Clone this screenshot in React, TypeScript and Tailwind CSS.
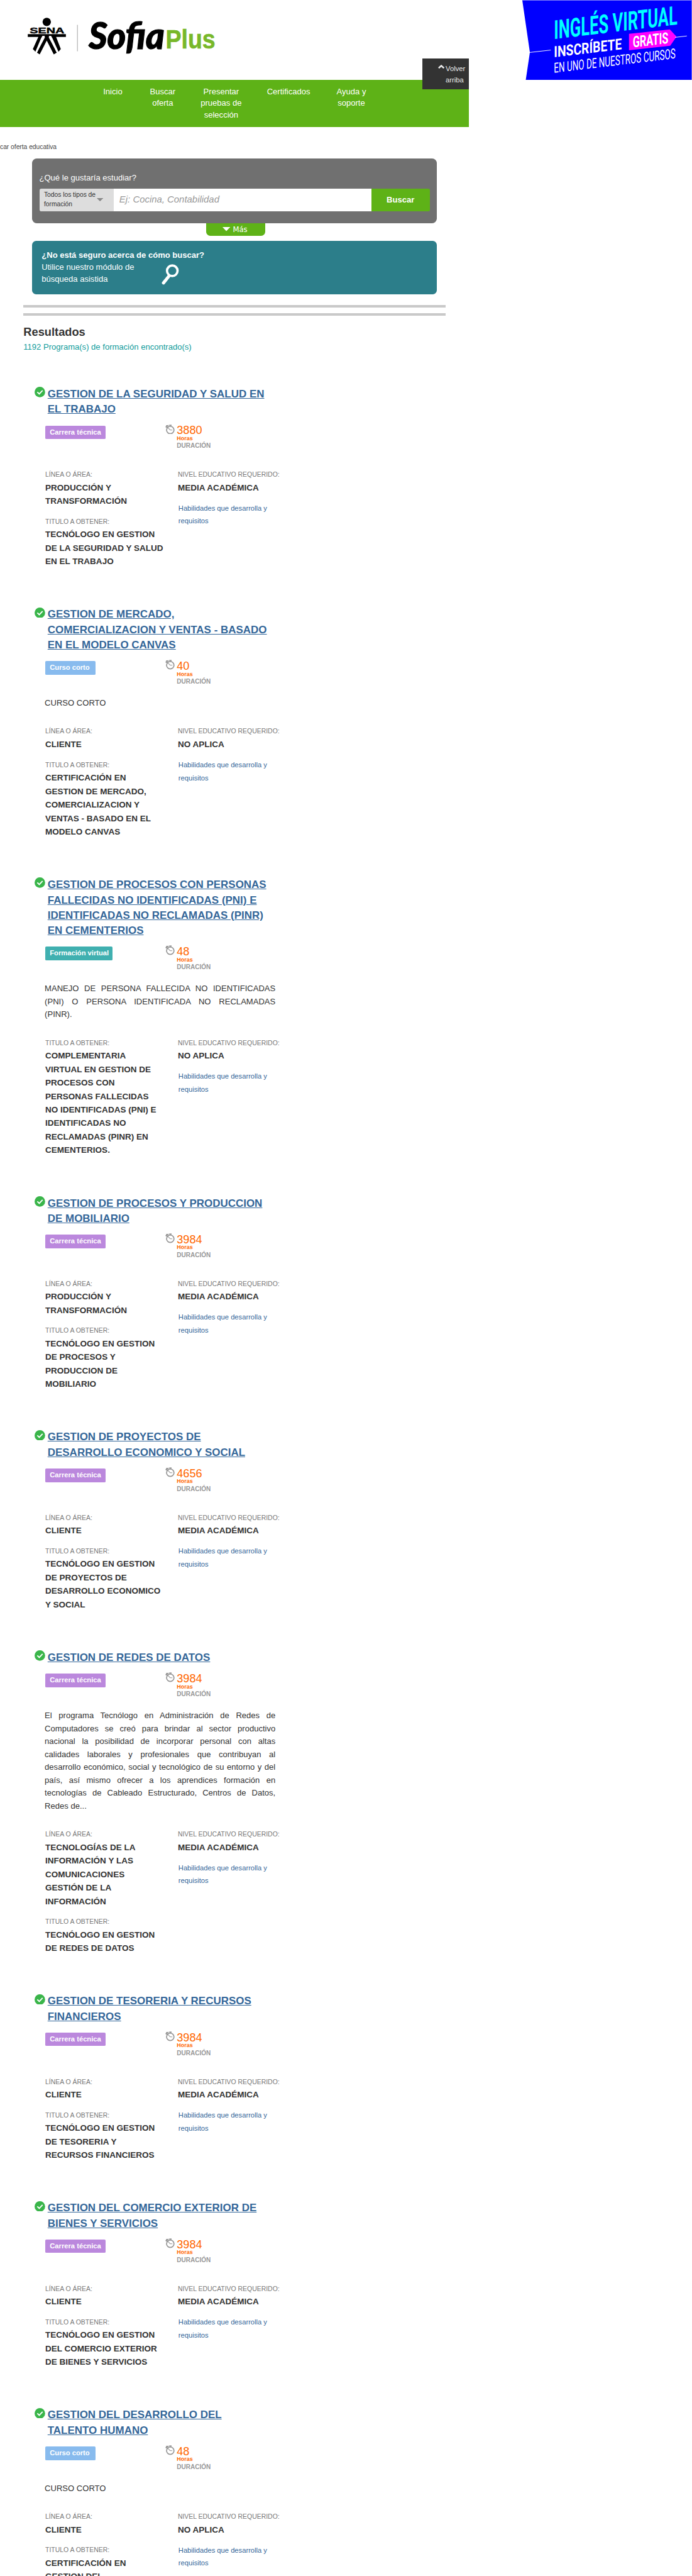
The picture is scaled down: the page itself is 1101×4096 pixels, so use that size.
import React from "react";

type Kind = "tecnica" | "corto" | "virtual";

interface Program {
  title: string;
  kind: Kind;
  hours: number;
  description?: string;
  area?: string;
  degree: string;
  level: string;
}

const KINDS: Record<Kind, { label: string; className: string }> = {
  tecnica: { label: "Carrera técnica", className: "w-[103px] bg-[#bb88dd]" },
  corto: { label: "Curso corto", className: "w-[86px] bg-[#88bbee]" },
  virtual: { label: "Formación virtual", className: "w-[115px] bg-[#40b0b0]" },
};

const PROGRAMS: Program[] = [
  {
    title: "GESTION DE LA SEGURIDAD Y SALUD EN\nEL TRABAJO",
    kind: "tecnica",
    hours: 3880,
    area: "PRODUCCIÓN Y\nTRANSFORMACIÓN",
    degree: "TECNÓLOGO EN GESTION\nDE LA SEGURIDAD Y SALUD\nEN EL TRABAJO",
    level: "MEDIA ACADÉMICA",
  },
  {
    title: "GESTION DE MERCADO,\nCOMERCIALIZACION Y VENTAS - BASADO\nEN EL MODELO CANVAS",
    kind: "corto",
    hours: 40,
    description: "CURSO CORTO",
    area: "CLIENTE",
    degree:
      "CERTIFICACIÓN EN\nGESTION DE MERCADO,\nCOMERCIALIZACION Y\nVENTAS - BASADO EN EL\nMODELO CANVAS",
    level: "NO APLICA",
  },
  {
    title:
      "GESTION DE PROCESOS CON PERSONAS\nFALLECIDAS NO IDENTIFICADAS (PNI) E\nIDENTIFICADAS NO RECLAMADAS (PINR)\nEN CEMENTERIOS",
    kind: "virtual",
    hours: 48,
    description:
      "MANEJO DE PERSONA FALLECIDA NO IDENTIFICADAS (PNI) O PERSONA IDENTIFICADA NO RECLAMADAS (PINR).",
    degree:
      "COMPLEMENTARIA\nVIRTUAL EN GESTION DE\nPROCESOS CON\nPERSONAS FALLECIDAS\nNO IDENTIFICADAS (PNI) E\nIDENTIFICADAS NO\nRECLAMADAS (PINR) EN\nCEMENTERIOS.",
    level: "NO APLICA",
  },
  {
    title: "GESTION DE PROCESOS Y PRODUCCION\nDE MOBILIARIO",
    kind: "tecnica",
    hours: 3984,
    area: "PRODUCCIÓN Y\nTRANSFORMACIÓN",
    degree: "TECNÓLOGO EN GESTION\nDE PROCESOS Y\nPRODUCCION DE\nMOBILIARIO",
    level: "MEDIA ACADÉMICA",
  },
  {
    title: "GESTION DE PROYECTOS DE\nDESARROLLO ECONOMICO Y SOCIAL",
    kind: "tecnica",
    hours: 4656,
    area: "CLIENTE",
    degree: "TECNÓLOGO EN GESTION\nDE PROYECTOS DE\nDESARROLLO ECONOMICO\nY SOCIAL",
    level: "MEDIA ACADÉMICA",
  },
  {
    title: "GESTION DE REDES DE DATOS",
    kind: "tecnica",
    hours: 3984,
    description:
      "El programa Tecnólogo en Administración de Redes de Computadores se creó para brindar al sector productivo nacional la posibilidad de incorporar personal con altas calidades laborales y profesionales que contribuyan al desarrollo económico, social y tecnológico de su entorno y del país, así mismo ofrecer a los aprendices formación en tecnologías de Cableado Estructurado, Centros de Datos, Redes de...",
    area: "TECNOLOGÍAS DE LA\nINFORMACIÓN Y LAS\nCOMUNICACIONES\nGESTIÓN DE LA\nINFORMACIÓN",
    degree: "TECNÓLOGO EN GESTION\nDE REDES DE DATOS",
    level: "MEDIA ACADÉMICA",
  },
  {
    title: "GESTION DE TESORERIA Y RECURSOS\nFINANCIEROS",
    kind: "tecnica",
    hours: 3984,
    area: "CLIENTE",
    degree: "TECNÓLOGO EN GESTION\nDE TESORERIA Y\nRECURSOS FINANCIEROS",
    level: "MEDIA ACADÉMICA",
  },
  {
    title: "GESTION DEL COMERCIO EXTERIOR DE\nBIENES Y SERVICIOS",
    kind: "tecnica",
    hours: 3984,
    area: "CLIENTE",
    degree: "TECNÓLOGO EN GESTION\nDEL COMERCIO EXTERIOR\nDE BIENES Y SERVICIOS",
    level: "MEDIA ACADÉMICA",
  },
  {
    title: "GESTION DEL DESARROLLO DEL\nTALENTO HUMANO",
    kind: "corto",
    hours: 48,
    description: "CURSO CORTO",
    area: "CLIENTE",
    degree: "CERTIFICACIÓN EN\nGESTION DEL\nDESARROLLO DEL\nTALENTO HUMANO",
    level: "NO APLICA",
  },
];

function Logo() {
  return (
    <svg className="h-[90px] w-[345px]" viewBox="0 0 1035 270">
      <circle cx="133" cy="51" r="21.5" />
      <text x="46" y="108" fontSize="41" textLength="177" lengthAdjust="spacingAndGlyphs" className="font-['Liberation_Sans'] font-bold" stroke="#000" strokeWidth="1.5">
        SENA
      </text>
      <path d="M36 113H231V128H181L205 190L193 203L162 134L155 122H143L184 208L169 217L133 146L97 217L83 208L124 122H111L104 134L75 203L62 190L90 128H36Z" />
      <path d="M121 128L80 205M146 128L187 205" stroke="#fff" strokeWidth="7" fill="none" />
      <path d="M133 172L112 217H154Z" fill="#fff" />
      <path d="M290 66V201" stroke="#999" strokeWidth="3" />
      <text x="348" y="189" fontSize="190" textLength="388" lengthAdjust="spacingAndGlyphs" className="font-['Lato'] font-black italic" stroke="#000" strokeWidth="4">
        Sofia
      </text>
      <text x="741" y="188" fontSize="137" textLength="255" lengthAdjust="spacingAndGlyphs" fill="#78b82a" stroke="#78b82a" strokeWidth="2" className="font-['Liberation_Sans'] font-bold">
        Plus
      </text>
    </svg>
  );
}

function Banner() {
  return (
    <svg className="h-[136px] w-[290px]" viewBox="570 0 870 408">
      <path d="M573 0H1440V408H591L612 268Z" fill="#0000ff" />
      <path d="M573 0H1440V3H573Z" fill="#8080f8" />
      <g className="font-['Roboto']" fill="#fff">
        <text transform="translate(735 200) skewY(-6.8)" fontSize="134" textLength="632" lengthAdjust="spacingAndGlyphs" fontWeight="700" fill="#00ffff">
          INGLÉS VIRTUAL
        </text>
        <text transform="translate(735 293) skewY(-6.8)" fontSize="78" textLength="347" lengthAdjust="spacingAndGlyphs" fontWeight="700">
          INSCRÍBETE
        </text>
        <text transform="translate(735 372) skewY(-6.8)" fontSize="71" textLength="622" lengthAdjust="spacingAndGlyphs" fontWeight="400">
          EN UNO DE NUESTROS CURSOS
        </text>
        <path d="M1119 173L1328 150L1362 187L1330 234L1119 257Z" fill="#ff00ff" />
        <text transform="translate(1138 243) skewY(-6.8)" fontSize="80" textLength="182" lengthAdjust="spacingAndGlyphs" fontWeight="700">
          GRATIS
        </text>
      </g>
      <path d="M612 268L719 256M1355 191L1415 184" stroke="#fff" strokeWidth="3" />
    </svg>
  );
}

function CheckIcon() {
  return (
    <svg className="mt-[1px] mr-[4.2px] size-[18px] shrink-0" viewBox="0 0 54 54">
      <circle cx="27" cy="27" r="27" fill="#3ab54a" />
      <path d="M14 27L24 37L41 19" stroke="#fff" strokeWidth="6" fill="none" />
    </svg>
  );
}

function ClockIcon() {
  return (
    <svg className="mr-[3.5px] h-[16.7px] w-[16px] shrink-0" viewBox="696 217 48 50" stroke="#999" fill="none">
      <circle cx="721.500" cy="245" r="19" strokeWidth="5.500" />
      <path d="M698 231L712 221M703 220V233" strokeWidth="6" />
      <path d="M716 221H728" strokeWidth="6" />
      <path d="M708 232L721 245H732" strokeWidth="3.500" />
    </svg>
  );
}

function Field({ label, value }: { label: string; value: string }) {
  return (
    <div>
      <p className="text-[11.2px] leading-[20px] whitespace-nowrap text-[#777]">{label}</p>
      <p className="text-[14.5px] leading-[23px] font-bold whitespace-pre text-[#333]">{value}</p>
    </div>
  );
}

function ProgramCard({ program }: { program: Program }) {
  const kind = KINDS[program.kind];
  return (
    <article className="mb-[65.4px] ml-[59px] w-[430px]">
      <div className="flex items-start">
        <CheckIcon />
        <h3 className="pt-[0.8px] text-[18.2px] leading-[26px] font-bold whitespace-pre text-[#336699] underline">
          {program.title}
        </h3>
      </div>
      <div className="mt-[12px] ml-[18px] flex h-[63px] items-start">
        <div className="w-[205px] pt-[2px]">
          <div className={`h-[23px] rounded-[2px] pl-[8px] text-[12px] leading-[23px] font-bold whitespace-nowrap text-white ${kind.className}`}>
            {kind.label}
          </div>
        </div>
        <ClockIcon />
        <div className="pt-[1.5px]">
          <p className="text-[19.4px] leading-[18px] text-[#ff6600]">{program.hours}</p>
          <p className="text-[9.6px] leading-[10px] font-bold text-[#ff6600]">Horas</p>
          <p className="text-[10.75px] leading-[16px] font-bold text-[#999]">DURACIÓN</p>
        </div>
      </div>
      {program.description && (
        <p className="ml-[17.2px] w-[393.500px] text-justify text-[14px] leading-[22px] text-[#333]">
          {program.description}
        </p>
      )}
      <div className={`ml-[18.2px] flex ${program.description ? "mt-[27.5px]" : "mt-[13.5px]"}`}>
        <div className="flex w-[226px] flex-col gap-[14px]">
          {program.area && <Field label="LÍNEA O ÁREA:" value={program.area} />}
          <Field label="TITULO A OBTENER:" value={program.degree} />
        </div>
        <div className="w-[180px]">
          <Field label="NIVEL EDUCATIVO REQUERIDO:" value={program.level} />
          <a className="mt-[12.5px] ml-px block text-[12px] leading-[22px] text-[#336699]">
            Habilidades que desarrolla y<br />
            requisitos
          </a>
        </div>
      </div>
    </article>
  );
}

export default function App() {
  return (
    <div className="relative h-[4390px] w-[1180px] overflow-hidden bg-white font-['Liberation_Sans',Arial,sans-serif] [zoom:0.93305]">
      <header className="flex h-[136px] justify-between">
        <div className="pt-[20px] pl-[35px]">
          <Logo />
        </div>
        <Banner />
      </header>
      <nav className="flex h-[80px] w-[800px] bg-[#5eb217] pt-[10.5px] pl-[176px] text-center text-[14px] leading-[20px] whitespace-nowrap text-white">
        <a className="mr-[47px]">Inicio</a>
        <a className="mr-[43px]">Buscar<br />oferta</a>
        <a className="mr-[43px]">Presentar<br />pruebas de<br />selección</a>
        <a className="mr-[45px]">Certificados</a>
        <a>Ayuda y<br />soporte</a>
      </nav>
      <div className="absolute top-[100px] left-[720px] flex h-[52px] w-[80px] bg-[#333] pt-[7px] pl-[27px] text-[12px] leading-[20px] text-[#eee]">
        <svg className="mt-[3px] mr-[2px] h-[7px] w-[11px] shrink-0" viewBox="0 0 33 21">
          <path d="M3 17L16.500 5L30 17" stroke="#eee" strokeWidth="8" fill="none" />
        </svg>
        <span>Volver<br />arriba</span>
      </div>

      <div className="mt-[24px] flex h-[30px] w-[96.500px] justify-end text-[11px] leading-[21.500px] whitespace-nowrap text-[#444]">
        Buscar oferta educativa
      </div>

      <section className="ml-[55px] h-[110px] w-[690px] rounded-[8px] bg-[#707070] px-[12px] pt-[24px]">
        <label className="block text-[14px] leading-[20px] text-white">¿Qué le gustaría estudiar?</label>
        <div className="mt-[8px] flex h-[38px] overflow-hidden rounded-[3px]">
          <div className="flex w-[127px] items-start bg-[#ddd] pt-[2.500px] pl-[8px] text-[11px] leading-[16px] whitespace-nowrap text-[#333]">
            <span className="w-[90px]">Todos los tipos de<br />formación</span>
            <svg className="mt-[13.500px] h-[5.500px] w-[11px]" viewBox="0 0 11 5.500">
              <path d="M0 0H11L5.500 5.500Z" fill="#888" />
            </svg>
          </div>
          <div className="w-[439px] bg-white pl-[9.500px] text-[16px] leading-[37px] text-[#999] italic">Ej: Cocina, Contabilidad</div>
          <button className="w-[100px] bg-[#5eb217] text-[14px] font-bold text-white">Buscar</button>
        </div>
      </section>
      <div className="ml-[352px] flex h-[22px] w-[100px] items-start rounded-b-[7px] bg-[#5eb217] pl-[27px] text-white">
        <svg className="mt-[7px] mr-[5px] h-[7px] w-[13px]" viewBox="0 0 13 7">
          <path d="M0 0H13L6.500 7Z" fill="#fff" />
        </svg>
        <span className="font-['DejaVu_Sans'] text-[12.5px] leading-[22.500px]">Más</span>
      </div>

      <section className="mt-[8px] ml-[55px] h-[92px] w-[690px] rounded-[7px] bg-[#2c7e8a] pt-[16px] pl-[16px] text-[14px] leading-[20px] text-white">
        <p className="font-bold">¿No está seguro acerca de cómo buscar?</p>
        <div className="flex">
          <p className="w-[204.500px]">Utilice nuestro módulo de<br />búsqueda asistida</p>
          <svg className="mt-[4.500px] h-[35px] w-[30px]" viewBox="0 0 90 105" fill="none" stroke="#fff">
            <circle cx="55" cy="34" r="27" strokeWidth="12" />
            <path d="M38 61L10 96" strokeWidth="16" strokeLinecap="round" />
          </svg>
        </div>
      </section>

      <div className="mt-[18px] ml-[40px] h-[18px] w-[720px] border-y-[4.300px] border-[#c9c9c9]" />
      <div className="mt-[14px] ml-[40px] h-[106.4px]">
        <h2 className="text-[19.6px] leading-[28px] font-bold text-[#333]">Resultados</h2>
        <p className="mt-[2.4px] text-[14px] leading-[20px] text-[#109c9c]">1192 Programa(s) de formación encontrado(s)</p>
      </div>

      <main>
        {PROGRAMS.map((program) => (
          <ProgramCard key={program.title} program={program} />
        ))}
      </main>
    </div>
  );
}
